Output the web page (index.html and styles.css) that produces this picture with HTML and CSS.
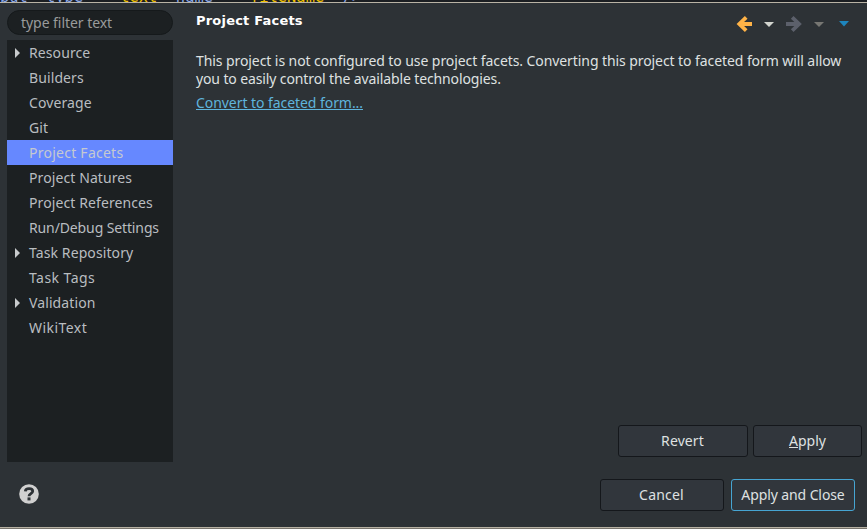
FILE: index.html
```html
<!DOCTYPE html>
<html lang="en">
<head>
<meta charset="utf-8">
<title>Project Facets</title>
<link rel="stylesheet" href="styles.css">
</head>
<body>
<div class="editor"><pre class="code"><span class="attr"><span class="tag">put</span> type</span> <i>=</i> "text" <span class="attr">name</span> <i>=</i> "fileName" <span class="attr">/&gt;</span></pre></div>
<main class="dialog">
  <div class="body">
    <aside class="side">
      <div class="filter"><span>type filter text</span></div>
      <ul class="tree">
        <li class="parent"><span class="loose">Resource</span></li>
        <li><span class="loose">Builders</span></li>
        <li><span class="loose">Coverage</span></li>
        <li><span class="loose">Git</span></li>
        <li class="selected"><span class="wide">Project Facets</span></li>
        <li><span class="loose">Project Natures</span></li>
        <li><span class="loose">Project References</span></li>
        <li><span class="tight">Run/Debug Settings</span></li>
        <li class="parent"><span class="loose">Task Repository</span></li>
        <li><span class="wider">Task Tags</span></li>
        <li class="parent"><span class="loose">Validation</span></li>
        <li><span class="wider">WikiText</span></li>
      </ul>
    </aside>
    <section class="page">
      <header class="head">
        <h1>Project Facets</h1>
        <svg class="nav" width="116" height="20" viewBox="0 0 116 20">
          <g fill="none" stroke-width="3.800">
            <path d="M17 10H4.500M11.200 3.300L4.300 10L11.200 16.700" stroke="#ffb347"/>
            <path d="M51 10H63.500M57.200 3.300L64.100 10L57.200 16.700" stroke="#5c606b"/>
          </g>
          <path d="M29 8H39L34 13Z" fill="#d3d5cf"/>
          <path d="M79 8H89L84 13Z" fill="#777773"/>
          <path d="M104 7H114L109 12.500Z" fill="#1d85bd"/>
        </svg>
      </header>
      <p class="message">This project is not configured to use project facets. Converting this project to faceted form will allow<br><span class="tight">you to easily control the available technologies.</span></p>
      <a class="link">Convert to faceted form...</a>
      <div class="actions"><button class="revert">Revert</button><button class="apply"><span><u>A</u>pply</span></button></div>
    </section>
  </div>
  <footer class="foot">
    <svg class="help" width="20" height="20" viewBox="0 0 20 20">
      <circle cx="10" cy="10" r="9.800" fill="#d0d0d0"/>
      <path d="M6.300 7.300C6.600 3.700 13.700 3.700 13.700 7.300C13.700 9.700 10 9.600 10 12.200" fill="none" stroke="#2d3236" stroke-width="2.800"/>
      <path d="M8.500 13.400H11.500V16.400H8.500Z" fill="#2d3236"/>
    </svg>
    <div class="closing"><button class="cancel">Cancel</button><button class="primary">Apply and Close</button></div>
  </footer>
</main>
<div class="edge"></div>
</body>
</html>
```
FILE: styles.css
```css
* { box-sizing: border-box; }
body { margin: 0; width: 867px; height: 529px; overflow: hidden; display: flex; flex-direction: column; background: #2d3236; color: #dfe1e1; font: 14px/18px "Noto Sans", sans-serif; }
.editor { height: 2px; flex: none; overflow: hidden; background: #1b1e22; }
.code { margin: -11px 0 0; font: 15.400px/16px "DejaVu Sans Mono", monospace; color: #f0c000; }
.code .attr { color: #8aa8e8; }
.code .tag { margin-right: 9px; }
.code i { color: #777; font-style: normal; }
.dialog { flex: 1; min-height: 0; border-top: 1px solid #b9b3a5; display: flex; flex-direction: column; }
.body { display: flex; height: 459px; flex: none; padding-left: 7px; }
.side { width: 166px; padding-top: 7px; }
.filter { height: 25px; border: 1px solid #15191b; border-radius: 13px; background: #1c2022; color: #999b9b; padding-left: 13px; line-height: 23px; letter-spacing: -.05px; }
.tree { list-style: none; margin: 5px 0 0; padding: 0; height: 422px; background: #1c2022; color: #b9bdc0; }
.tree li { height: 25px; line-height: 25px; padding-left: 22px; white-space: nowrap; display: flex; align-items: center; }
.parent::before { content: ""; border: solid transparent; border-width: 5px 0 5px 5px; border-left-color: #c8cbcd; margin: 0 9px 0 -14px; }
.tree .selected { background: #6688ff; color: #c5c9d0; }
.loose { letter-spacing: .1px; }
.wide { letter-spacing: .25px; }
.wider { letter-spacing: .45px; }
.tight { letter-spacing: -.12px; }
.page { flex: 1; display: flex; flex-direction: column; padding: 8px 5px 5px 23px; }
.head { display: flex; justify-content: space-between; height: 41px; padding-right: 11px; }
h1 { margin: 0; font: bold 13px/20px "DejaVu Sans", sans-serif; letter-spacing: .2px; color: #fff; }
.nav { margin-top: 3px; }
.message { margin: 0; white-space: nowrap; letter-spacing: -.08px; }
.link { align-self: flex-start; margin-top: 6px; color: #5fb4dc; text-decoration: underline; letter-spacing: -.06px; }
.actions { display: flex; gap: 5px; justify-content: flex-end; margin-top: auto; }
button { height: 32px; padding: 0; border: 1px solid #14171b; border-radius: 3px; background: #31363c; color: #dfe1e1; font: inherit; white-space: nowrap; }
.revert { width: 130px; letter-spacing: .1px; padding-right: 1px; }
.apply { width: 109px; }
.foot { display: flex; justify-content: space-between; padding: 17px 12px 0 19px; }
.help { margin-top: 5px; }
.closing { display: flex; gap: 7px; }
.cancel { width: 124px; letter-spacing: .2px; padding-right: 1px; }
.primary { width: 124px; border-color: #46a5d2; letter-spacing: -.1px; }
.edge { height: 2px; flex: none; background: #77746c; border-top: 1px solid #b9b3a5; }
```
